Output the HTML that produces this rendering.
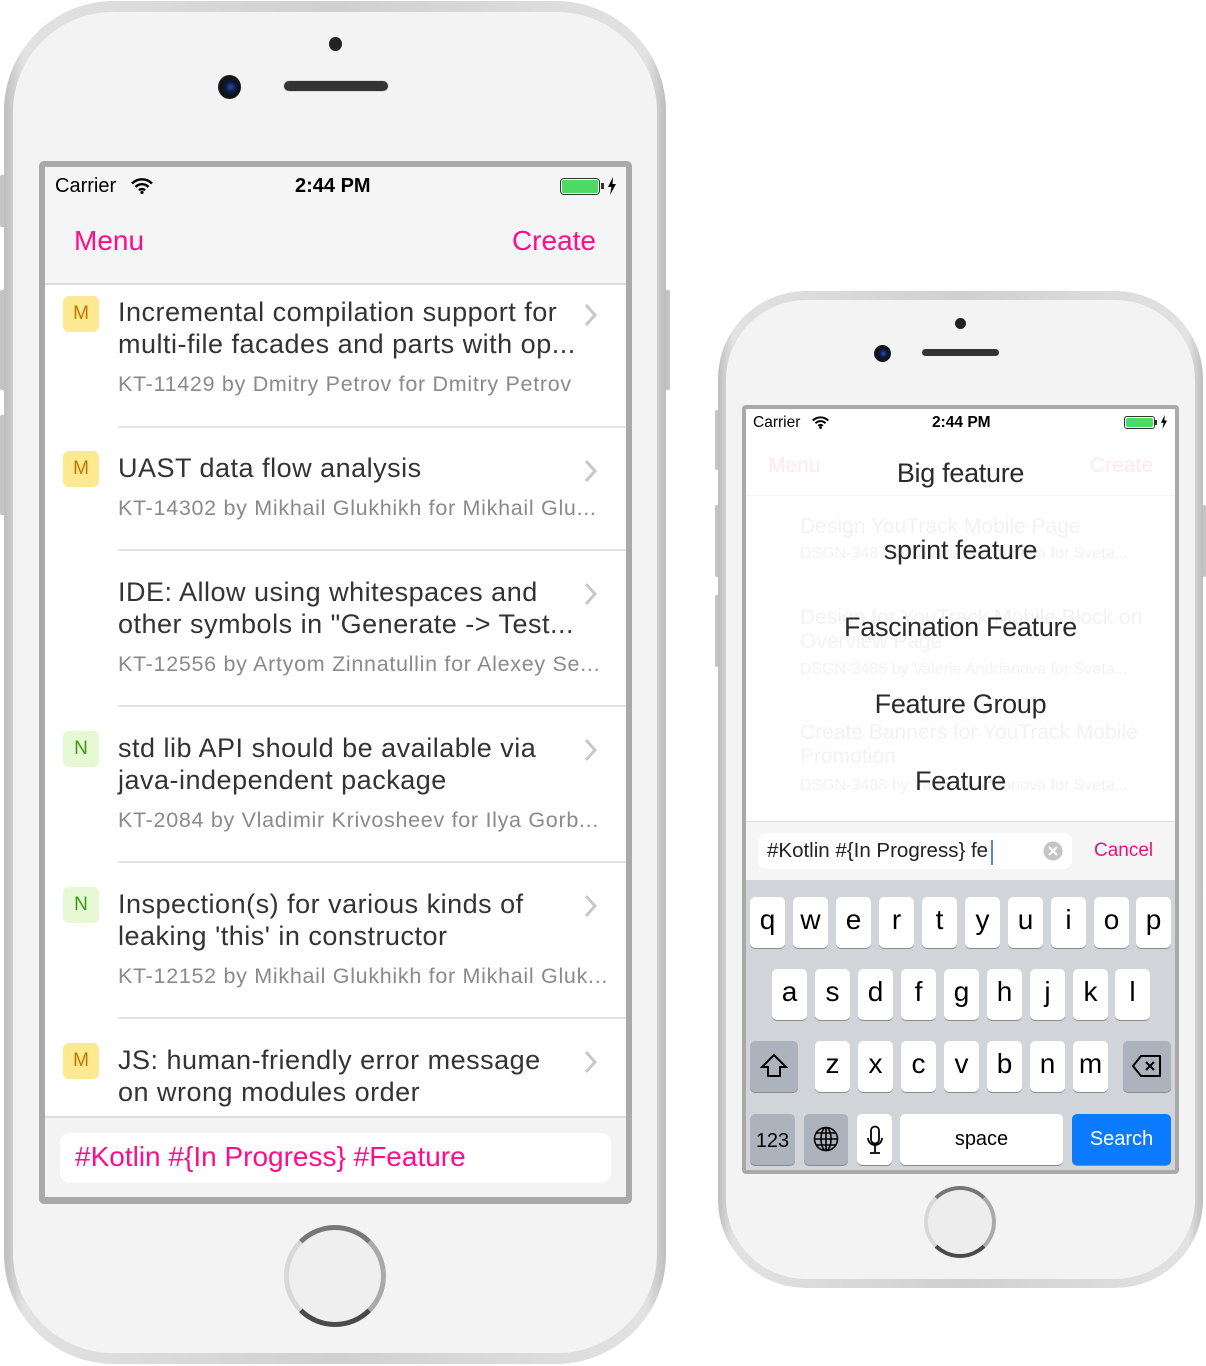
<!DOCTYPE html>
<html><head><meta charset="utf-8">
<style>
*{margin:0;padding:0;box-sizing:border-box}
body{width:1206px;height:1366px;background:#fff;position:relative;overflow:hidden;font-family:"Liberation Sans",sans-serif}
.a{position:absolute}
.body{position:absolute;background:linear-gradient(90deg,#bdbdbd,#e2e2e2 3%,#d0d0d0 50%,#e2e2e2 97%,#bdbdbd);}
.face{position:absolute;background:#f3f3f3}
.btn{position:absolute;background:#c4c4c4;border-radius:2px}
.t{position:absolute;white-space:nowrap;color:#333;font-size:27px;letter-spacing:0.5px;line-height:32px}
.m{position:absolute;white-space:nowrap;color:#8a8a8a;font-size:21.5px;letter-spacing:0.7px;line-height:26px}
.bd{position:absolute;width:36px;height:36px;border-radius:6px;font-size:19px;line-height:36px;text-align:center}
.bm{background:#fde98f;color:#c07600}
.bn{background:#e6f8d4;color:#3a9a14}
.sep{position:absolute;height:2px;background:#e3e3e3}
.k{position:absolute;width:35px;height:51px;background:#fff;border-radius:5px;box-shadow:0 1px 0 #8a8c90;font-size:28px;text-align:center;line-height:46px;color:#000}
.kd{background:#adb3bd}
.pk{position:absolute;left:746px;width:429px;text-align:center;font-size:27px;color:#2a2a2a;letter-spacing:-0.3px}
.g{position:absolute;white-space:nowrap;color:#f2f2f2;font-size:21px}
</style></head><body>

<!-- LEFT PHONE -->
<div class="btn" style="left:0;top:175px;width:6px;height:52px"></div>
<div class="btn" style="left:0;top:290px;width:6px;height:100px"></div>
<div class="btn" style="left:0;top:415px;width:6px;height:100px"></div>
<div class="btn" style="left:664px;top:290px;width:6px;height:100px"></div>
<div class="body" style="left:4px;top:1px;width:662px;height:1363px;border-radius:110px"></div>
<div class="face" style="left:13px;top:12px;width:644px;height:1341px;border-radius:100px"></div>
<div class="a" style="left:329px;top:37px;width:13px;height:14px;border-radius:50%;background:#222"></div>
<div class="a" style="left:218px;top:75px;width:23px;height:24px;border-radius:50%;background:radial-gradient(circle at 55% 50%,#2a4fa0 0,#0a1a40 30%,#111 55%,#333 100%)"></div>
<div class="a" style="left:284px;top:81px;width:104px;height:10px;border-radius:5px;background:#333;box-shadow:0 0 0 1px #ddd"></div>
<div class="a" style="left:39px;top:161px;width:593px;height:1043px;background:#a9a9a9;border-radius:5px"></div>
<div class="a" style="left:45px;top:167px;width:581px;height:1030px;background:#fff;overflow:hidden">
  <div class="a" style="left:0;top:0;width:581px;height:118px;background:#f5f5f5;border-bottom:2px solid #dcdcdc"></div>
  <div class="a" style="left:10px;top:8px;font-size:20px;color:#000">Carrier</div>
  <svg class="a" style="left:86px;top:11px" width="22" height="16" viewBox="0 0 22 16"><path d="M1 5.5a14 14 0 0 1 20 0M4.5 9a9 9 0 0 1 13 0M8 12.3a4.2 4.2 0 0 1 6 0" stroke="#000" stroke-width="2.4" fill="none"/><circle cx="11" cy="14.5" r="1.6"/></svg>
  <div class="a" style="left:250px;top:8px;font-size:20px;font-weight:bold;color:#000">2:44 PM</div>
  <div class="a" style="left:515px;top:11px;width:40px;height:17px;border:1.5px solid #333;border-radius:4px;padding:1px"><div style="width:100%;height:100%;background:#4cd964;border-radius:2px"></div></div>
  <div class="a" style="left:556px;top:16px;width:3px;height:6px;background:#333"></div>
  <svg class="a" style="left:562px;top:10px" width="10" height="18" viewBox="0 0 10 18"><path d="M6 0L1 10h3.5L3 18l6-11H5.5z"/></svg>
  <div class="a" style="left:29px;top:58px;font-size:28px;color:#ff0d8b">Menu</div>
  <div class="a" style="right:30px;top:58px;font-size:28px;color:#ff0d8b">Create</div>
</div>
<svg width="0" height="0"><defs><path id="chev" d="M2 2l9 10-9 10" stroke="#c7c7cc" stroke-width="3" fill="none"/></defs></svg>

<div class="bd bm" style="left:63px;top:296px">M</div>
<div class="t" style="left:118px;top:296px">Incremental compilation support for<br>multi-file facades and parts with op...</div>
<div class="m" style="left:118px;top:371px">KT-11429 by Dmitry Petrov for Dmitry Petrov</div>
<svg class="a" style="left:584px;top:303px" width="14" height="24"><use href="#chev"/></svg>
<div class="sep" style="left:118px;top:426px;width:508px"></div>

<div class="bd bm" style="left:63px;top:451px">M</div>
<div class="t" style="left:118px;top:452px">UAST data flow analysis</div>
<div class="m" style="left:118px;top:495px">KT-14302 by Mikhail Glukhikh for Mikhail Glu...</div>
<svg class="a" style="left:584px;top:459px" width="14" height="24"><use href="#chev"/></svg>
<div class="sep" style="left:118px;top:549px;width:508px"></div>

<div class="t" style="left:118px;top:576px">IDE: Allow using whitespaces and<br>other symbols in "Generate -&gt; Test...</div>
<div class="m" style="left:118px;top:651px">KT-12556 by Artyom Zinnatullin for Alexey Se...</div>
<svg class="a" style="left:584px;top:582px" width="14" height="24"><use href="#chev"/></svg>
<div class="sep" style="left:118px;top:705px;width:508px"></div>

<div class="bd bn" style="left:63px;top:731px">N</div>
<div class="t" style="left:118px;top:732px">std lib API should be available via<br>java-independent package</div>
<div class="m" style="left:118px;top:807px">KT-2084 by Vladimir Krivosheev for Ilya Gorb...</div>
<svg class="a" style="left:584px;top:738px" width="14" height="24"><use href="#chev"/></svg>
<div class="sep" style="left:118px;top:861px;width:508px"></div>

<div class="bd bn" style="left:63px;top:887px">N</div>
<div class="t" style="left:118px;top:888px">Inspection(s) for various kinds of<br>leaking 'this' in constructor</div>
<div class="m" style="left:118px;top:963px">KT-12152 by Mikhail Glukhikh for Mikhail Gluk...</div>
<svg class="a" style="left:584px;top:894px" width="14" height="24"><use href="#chev"/></svg>
<div class="sep" style="left:118px;top:1017px;width:508px"></div>

<div class="bd bm" style="left:63px;top:1043px">M</div>
<div class="t" style="left:118px;top:1044px">JS: human-friendly error message<br>on wrong modules order</div>
<svg class="a" style="left:584px;top:1050px" width="14" height="24"><use href="#chev"/></svg>

<div class="a" style="left:45px;top:1116px;width:581px;height:81px;background:#f3f3f3;border-top:2px solid #dcdcdc"></div>
<div class="a" style="left:60px;top:1133px;width:551px;height:50px;background:#fff;border-radius:10px"></div>
<div class="a" style="left:75px;top:1141px;font-size:28px;color:#ff0d8b;white-space:nowrap">#Kotlin #{In Progress} #Feature</div>
<div class="a" style="left:284px;top:1225px;width:102px;height:102px;border-radius:50%;border:5px solid #4a4a4a;border-left-color:#d8d8d8;border-right-color:#aaa;border-top-color:#777;background:#efefef"></div>

<!-- RIGHT PHONE -->
<div class="btn" style="left:715px;top:410px;width:6px;height:60px"></div>
<div class="btn" style="left:715px;top:505px;width:6px;height:72px"></div>
<div class="btn" style="left:715px;top:595px;width:6px;height:72px"></div>
<div class="btn" style="left:1200px;top:505px;width:6px;height:72px"></div>
<div class="body" style="left:718px;top:291px;width:485px;height:997px;border-radius:88px"></div>
<div class="face" style="left:726px;top:300px;width:469px;height:979px;border-radius:80px"></div>
<div class="a" style="left:955px;top:318px;width:11px;height:11px;border-radius:50%;background:#222"></div>
<div class="a" style="left:874px;top:345px;width:17px;height:17px;border-radius:50%;background:radial-gradient(circle at 55% 50%,#2a4fa0 0,#0a1a40 30%,#111 55%,#333 100%)"></div>
<div class="a" style="left:922px;top:349px;width:77px;height:7px;border-radius:4px;background:#333"></div>
<div class="a" style="left:742px;top:405px;width:437px;height:769px;background:#a9a9a9;border-radius:4px"></div>
<div class="a" style="left:746px;top:409px;width:429px;height:761px;background:#fff;overflow:hidden">
  <div class="a" style="left:7px;top:5px;font-size:15.5px;color:#000">Carrier</div>
  <svg class="a" style="left:66px;top:7px" width="17" height="13" viewBox="0 0 22 16"><path d="M1 5.5a14 14 0 0 1 20 0M4.5 9a9 9 0 0 1 13 0M8 12.3a4.2 4.2 0 0 1 6 0" stroke="#000" stroke-width="2.6" fill="none"/><circle cx="11" cy="14.5" r="1.8"/></svg>
  <div class="a" style="left:186px;top:5px;font-size:15.5px;font-weight:bold;color:#000">2:44 PM</div>
  <div class="a" style="left:378px;top:7px;width:31px;height:13px;border:1.2px solid #333;border-radius:3px;padding:1px"><div style="width:100%;height:100%;background:#4cd964;border-radius:2px"></div></div>
  <div class="a" style="left:409px;top:11px;width:2px;height:5px;background:#333"></div>
  <svg class="a" style="left:414px;top:6px" width="8" height="14" viewBox="0 0 10 18"><path d="M6 0L1 10h3.5L3 18l6-11H5.5z"/></svg>
  <div class="a" style="left:22px;top:45px;font-size:21px;color:#fde8f2">Menu</div>
  <div class="a" style="right:22px;top:45px;font-size:21px;color:#fde8f2">Create</div>
  <div class="a" style="left:0;top:86px;width:429px;height:1px;background:#f5f5f5"></div>
  <div class="g" style="left:54px;top:106px">Design YouTrack Mobile Page</div>
  <div class="g" style="left:54px;top:136px;font-size:16px">DSGN-3487 by Valerie Andrianova for Sveta...</div>
  <div class="g" style="left:54px;top:197px">Design for YouTrack Mobile Block on<br>Overview Page</div>
  <div class="g" style="left:54px;top:252px;font-size:16px">DSGN-3486 by Valerie Andrianova for Sveta...</div>
  <div class="g" style="left:54px;top:312px">Create Banners for YouTrack Mobile<br>Promotion</div>
  <div class="g" style="left:54px;top:368px;font-size:16px">DSGN-3488 by Valerie Andrianova for Sveta...</div>
  <div class="a" style="left:0;top:412px;width:429px;height:59px;background:#f5f5f5;border-top:1px solid #ddd"></div>
  <div class="a" style="left:12px;top:424px;width:314px;height:36px;background:#fff;border-radius:8px"></div>
  <div class="a" style="left:21px;top:430px;font-size:20.5px;color:#222;white-space:nowrap">#Kotlin #{In Progress} fe</div>
  <div class="a" style="left:245px;top:431px;width:2px;height:25px;background:#5a7ff0"></div>
  <svg class="a" style="left:297px;top:432px" width="20" height="20" viewBox="0 0 20 20"><circle cx="10" cy="10" r="9.5" fill="#c4c4c4"/><path d="M6 6l8 8M14 6l-8 8" stroke="#fff" stroke-width="2"/></svg>
  <div class="a" style="left:348px;top:431px;font-size:19px;color:#e6137e">Cancel</div>
  <div class="a" style="left:0;top:471px;width:429px;height:290px;background:#d1d4d9"></div>
</div>
<div class="pk" style="top:458px">Big feature</div>
<div class="pk" style="top:535px">sprint feature</div>
<div class="pk" style="top:612px">Fascination Feature</div>
<div class="pk" style="top:689px">Feature Group</div>
<div class="pk" style="top:766px">Feature</div>

<!-- keyboard -->
<div class="k" style="left:750px;top:897px">q</div><div class="k" style="left:793px;top:897px">w</div><div class="k" style="left:836px;top:897px">e</div><div class="k" style="left:879px;top:897px">r</div><div class="k" style="left:922px;top:897px">t</div><div class="k" style="left:965px;top:897px">y</div><div class="k" style="left:1008px;top:897px">u</div><div class="k" style="left:1051px;top:897px">i</div><div class="k" style="left:1094px;top:897px">o</div><div class="k" style="left:1136px;top:897px">p</div>
<div class="k" style="left:772px;top:969px">a</div><div class="k" style="left:815px;top:969px">s</div><div class="k" style="left:858px;top:969px">d</div><div class="k" style="left:901px;top:969px">f</div><div class="k" style="left:944px;top:969px">g</div><div class="k" style="left:987px;top:969px">h</div><div class="k" style="left:1030px;top:969px">j</div><div class="k" style="left:1073px;top:969px">k</div><div class="k" style="left:1115px;top:969px">l</div>
<div class="k kd" style="left:750px;top:1041px;width:48px"><svg width="28" height="26" viewBox="0 0 28 26" style="margin-top:12px"><path d="M14 2L2 14h6v9h12v-9h6z" fill="none" stroke="#000" stroke-width="2"/></svg></div>
<div class="k" style="left:815px;top:1041px">z</div><div class="k" style="left:858px;top:1041px">x</div><div class="k" style="left:901px;top:1041px">c</div><div class="k" style="left:944px;top:1041px">v</div><div class="k" style="left:987px;top:1041px">b</div><div class="k" style="left:1030px;top:1041px">n</div><div class="k" style="left:1073px;top:1041px">m</div>
<div class="k kd" style="left:1123px;top:1041px;width:48px"><svg width="32" height="24" viewBox="0 0 32 24" style="margin-top:13px"><path d="M10 2h19v20H10L2 12z" fill="none" stroke="#000" stroke-width="2" stroke-linejoin="round"/><path d="M15 8l8 8M23 8l-8 8" stroke="#000" stroke-width="2"/></svg></div>
<div class="k kd" style="left:750px;top:1114px;width:45px;font-size:20px;line-height:54px">123</div>
<div class="k kd" style="left:804px;top:1114px;width:44px"><svg width="26" height="26" viewBox="0 0 26 26" style="margin-top:12px"><g fill="none" stroke="#000" stroke-width="1.6"><circle cx="13" cy="13" r="11.5"/><ellipse cx="13" cy="13" rx="5" ry="11.5"/><path d="M13 1.5v23M1.5 13h23M3.5 7h19M3.5 19h19"/></g></svg></div>
<div class="k" style="left:857px;top:1114px;width:35px"><svg width="18" height="30" viewBox="0 0 18 30" style="margin-top:11px"><g fill="none" stroke="#000" stroke-width="1.8"><rect x="5" y="1.5" width="8" height="17" rx="4"/><path d="M2 13a7 7 0 0 0 14 0M9 20v7M4 28h10"/></g></svg></div>
<div class="k" style="left:900px;top:1114px;width:163px;font-size:20px;line-height:50px">space</div>
<div class="k" style="left:1072px;top:1114px;width:99px;background:#0a7aff;color:#fff;font-size:20px;line-height:50px">Search</div>
<div class="a" style="left:924px;top:1186px;width:72px;height:72px;border-radius:50%;border:4px solid #4a4a4a;border-left-color:#d8d8d8;border-right-color:#aaa;border-top-color:#777;background:#ededed"></div>
</body></html>
